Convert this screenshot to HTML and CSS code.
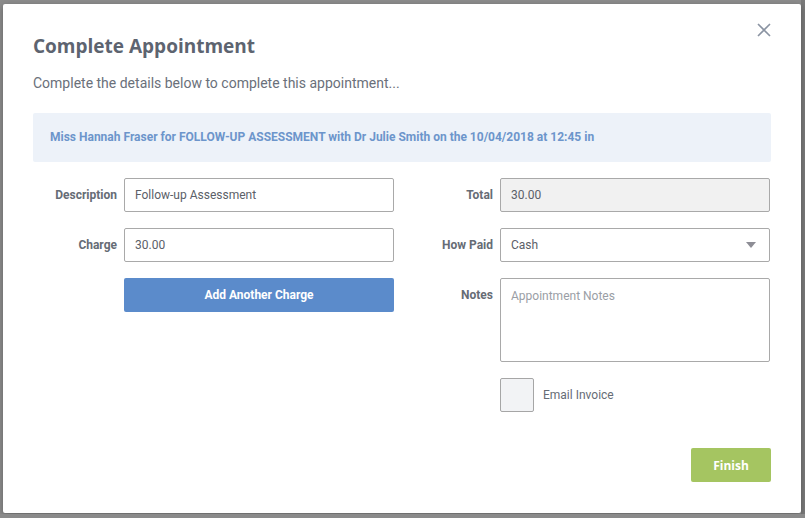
FILE: index.html
```html
<!DOCTYPE html>
<html lang="en">
<head>
  <meta charset="UTF-8">
  <meta name="viewport" content="width=device-width, initial-scale=1.0">
  <title>Complete Appointment</title>
  <link rel="stylesheet" href="styles.css">
</head>
<body>
  <div class="backdrop">
    <div class="modal">
      <button class="close" type="button" aria-label="Close">
        <svg width="14" height="14" viewBox="0 0 14 14">
          <path d="M1 1 L13 13 M13 1 L1 13" stroke="#8a93a2" stroke-width="1.6" fill="none"/>
        </svg>
      </button>

      <h1 class="modal-title">Complete Appointment</h1>
      <p class="modal-sub">Complete the details below to complete this appointment...</p>

      <div class="info-box">
        Miss Hannah Fraser for FOLLOW-UP ASSESSMENT with Dr Julie Smith on the 10/04/2018 at 12:45 in
      </div>

      <form class="form-grid">
        <div class="col">
          <div class="row">
            <label>Description</label>
            <input type="text" class="field" value="Follow-up Assessment">
          </div>
          <div class="row">
            <label>Charge</label>
            <input type="text" class="field" value="30.00">
          </div>
          <div class="row">
            <label></label>
            <button type="button" class="btn btn-blue">Add Another Charge</button>
          </div>
        </div>

        <div class="col">
          <div class="row">
            <label>Total</label>
            <input type="text" class="field readonly" value="30.00" readonly>
          </div>
          <div class="row">
            <label>How Paid</label>
            <div class="field select">
              <span>Cash</span>
              <span class="caret"></span>
            </div>
          </div>
          <div class="row top">
            <label>Notes</label>
            <textarea class="field notes" placeholder="Appointment Notes"></textarea>
          </div>
          <div class="row">
            <label></label>
            <div class="check-wrap">
              <span class="checkbox"></span>
              <span class="check-label">Email Invoice</span>
            </div>
          </div>
        </div>
      </form>

      <div class="footer">
        <button type="button" class="btn btn-green">Finish</button>
      </div>
    </div>
  </div>
</body>
</html>
```

FILE: styles.css
```css
/* Page / backdrop */
body {
  margin: 0;
  background: #8a8a8a;
  font-family: Roboto, 'Liberation Sans', sans-serif;
  color: #666c75;
}

.backdrop {
  padding: 4px 4px 0 3px;
  height: 514px;
  box-sizing: border-box;
  background: linear-gradient(to right, #8c8c8c 0, #8c8c8c 99.5%, #7a7a7a 99.5%);
}

/* Modal */
.modal {
  position: relative;
  width: 798px;
  height: 509px;
  box-sizing: border-box;
  padding: 30px 30px 0 30px;
  background: #fff;
  border-radius: 2px;
  box-shadow: 0 2px 6px rgba(0, 0, 0, 0.3);
}

.close {
  position: absolute;
  top: 19px;
  right: 30px;
  padding: 0;
  border: none;
  background: none;
  cursor: pointer;
}

.modal-title {
  margin: 0;
  font-family: 'Open Sans', sans-serif;
  font-size: 19px;
  line-height: 24px;
  font-weight: 700;
  color: #5d6470;
}

.modal-sub {
  margin: 15px 0 0;
  font-size: 14px;
  line-height: 20px;
  color: #6a707a;
}

.info-box {
  margin-top: 20px;
  height: 49px;
  padding: 0 17px;
  line-height: 49px;
  background: #edf2f9;
  border-radius: 2px;
  font-size: 12px;
  font-weight: 700;
  color: #6c95cb;
}

/* Form */
.form-grid {
  display: grid;
  grid-template-columns: 361px 361px;
  column-gap: 15px;
  margin-top: 16px;
}

.col {
  display: flex;
  flex-direction: column;
  gap: 16px;
}

.row {
  display: flex;
  align-items: center;
  gap: 7px;
}

.row.top {
  align-items: flex-start;
}

.row label {
  width: 84px;
  flex-shrink: 0;
  text-align: right;
  font-size: 12px;
  font-weight: 700;
  color: #666c75;
}

.row.top label {
  padding-top: 10px;
}

.field {
  box-sizing: border-box;
  width: 271px;
  height: 34px;
  padding: 0 10px;
  border: 1px solid #a9a9a9;
  border-radius: 2px;
  background: #fff;
  font-family: Roboto, 'Liberation Sans', sans-serif;
  font-size: 12px;
  color: #5b6068;
  outline: none;
}

.field.readonly {
  background: #f1f1f1;
}

.select {
  display: flex;
  align-items: center;
  justify-content: space-between;
  padding-right: 13px;
}

.caret {
  width: 0;
  height: 0;
  border-left: 5px solid transparent;
  border-right: 5px solid transparent;
  border-top: 6px solid #8d8d95;
}

.notes {
  height: 84px;
  padding-top: 9px;
  resize: none;
  line-height: 16px;
}

.notes::placeholder {
  color: #9a9ea5;
}

.check-wrap {
  display: flex;
  align-items: center;
  gap: 9px;
}

.checkbox {
  width: 34px;
  height: 34px;
  box-sizing: border-box;
  border: 1px solid #a6a6a6;
  border-radius: 2px;
  background: #f2f3f5;
}

.check-label {
  font-size: 12px;
  color: #666c75;
}

/* Buttons */
.btn {
  height: 34px;
  border: none;
  border-radius: 2px;
  font-family: Roboto, 'Liberation Sans', sans-serif;
  font-size: 12px;
  font-weight: 700;
  color: #fff;
  cursor: pointer;
}

.btn-blue {
  width: 270px;
  background: #5b8bcb;
}

.col:first-child .field {
  width: 270px;
}

.footer {
  display: flex;
  justify-content: flex-end;
  margin-top: 36px;
}

.btn-green {
  width: 80px;
  background: #a5c561;
  font-family: 'Open Sans', sans-serif;
}
```
